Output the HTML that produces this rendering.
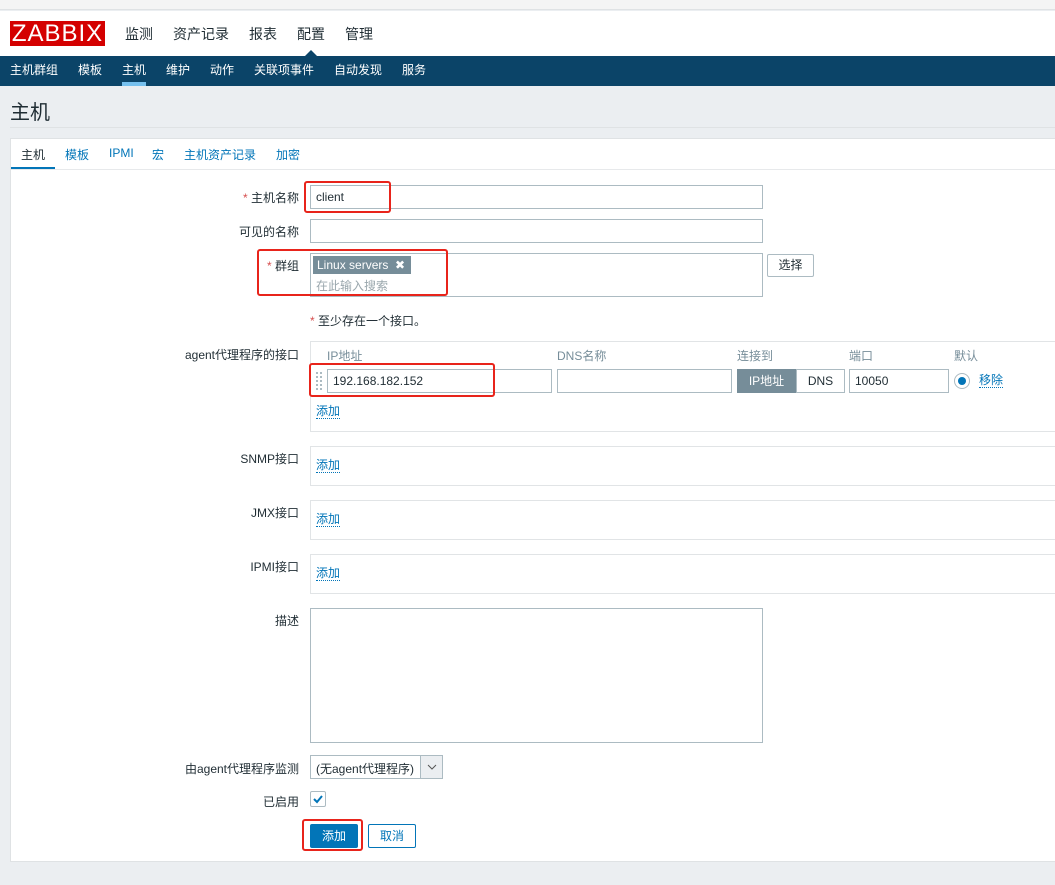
<!DOCTYPE html>
<html><head><meta charset="utf-8"><style>
*{box-sizing:border-box;margin:0;padding:0}
body{width:1055px;height:885px;overflow:hidden;background:#ebeef1;font-family:"Liberation Sans","Noto Sans CJK SC",sans-serif;font-size:12px;color:#1f2c33;position:relative}
.a{position:absolute}
.lbl{position:absolute;right:756px;text-align:right;white-space:nowrap}
.inp{position:absolute;border:1px solid #acbbc2;background:#fff;padding-left:5px;line-height:22px;height:24px}
.red{position:absolute;border:2px solid #e8241b;border-radius:3px}
.lnk{color:#0275b8;border-bottom:1px dotted #0275b8;line-height:14px}
.box{position:absolute;left:310px;right:0;border:1px solid #e1e4e6;border-right:none;background:#fff}
.st{color:#d64e4e}
</style></head><body>
<div class="a" style="top:0;left:0;width:1055px;height:10px;background:#f4f4f4;border-bottom:1px solid #dfe2e4"></div>
<div class="a" style="top:11px;left:0;width:1055px;height:45px;background:#fff"></div>
<div class="a" style="top:21px;left:10px;width:95px;height:25px;background:#d40000;color:#fff;font-size:24px;line-height:25px;text-align:center;letter-spacing:1px">ZABBIX</div>
<div class="a" style="top:24px;left:125px;font-size:14px;color:#1f2c33;word-spacing:0">
<span style="margin-right:20px">监测</span><span style="margin-right:20px">资产记录</span><span style="margin-right:20px">报表</span><span style="margin-right:20px">配置</span><span>管理</span></div>
<div class="a" style="top:50px;left:305px;width:0;height:0;border:6px solid transparent;border-bottom-color:#0b4468;border-top:0"></div>
<div class="a" style="top:56px;left:0;width:1055px;height:30px;background:#0b4468;color:#fff;font-size:12px;line-height:29px">
<span class="a" style="left:10px">主机群组</span><span class="a" style="left:78px">模板</span><span class="a" style="left:122px">主机</span><span class="a" style="left:166px">维护</span><span class="a" style="left:210px">动作</span><span class="a" style="left:254px">关联项事件</span><span class="a" style="left:334px">自动发现</span><span class="a" style="left:402px">服务</span>
<div class="a" style="left:122px;top:26px;width:24px;height:4px;background:#76c0ee"></div></div>
<div class="a" style="top:96px;left:10px;font-size:20px;color:#1f2c33">主机</div>
<div class="a" style="top:127px;left:10px;width:1045px;height:1px;background:#dfe2e4"></div>
<div class="a" style="top:138px;left:10px;width:1045px;height:724px;background:#fff;border:1px solid #dfe2e4;border-right:none"></div>
<div class="a" style="top:146px;left:21px;color:#1f2c33">主机</div>
<div class="a" style="top:146px;left:65px;color:#0275b8">模板</div>
<div class="a" style="top:146px;left:109px;color:#0275b8">IPMI</div>
<div class="a" style="top:146px;left:152px;color:#0275b8">宏</div>
<div class="a" style="top:146px;left:184px;color:#0275b8">主机资产记录</div>
<div class="a" style="top:146px;left:276px;color:#0275b8">加密</div>
<div class="a" style="top:167px;left:11px;width:44px;height:3px;background:#0275b8"></div>
<div class="a" style="top:169px;left:11px;width:1044px;height:1px;background:#e7e9eb"></div>

<div class="lbl" style="top:189px"><span class="st">*</span> 主机名称</div>
<div class="inp" style="top:185px;left:310px;width:453px">client</div>
<div class="lbl" style="top:223px">可见的名称</div>
<div class="inp" style="top:219px;left:310px;width:453px"></div>
<div class="lbl" style="top:257px"><span class="st">*</span> 群组</div>
<div class="inp" style="top:253px;left:310px;width:453px;height:44px;padding:3px"></div>
<div class="a" style="top:256px;left:313px;width:98px;height:18px;background:#768d99;color:#fff;line-height:18px;padding-left:4px">Linux servers&nbsp; ✖</div>
<div class="a" style="top:277px;left:316px;color:#9aa7ad">在此输入搜索</div>
<div class="a" style="top:254px;left:767px;width:47px;height:23px;border:1px solid #acbbc2;border-radius:2px;text-align:center;line-height:21px">选择</div>
<div class="a" style="top:312px;left:310px"><span class="st">*</span> 至少存在一个接口。</div>

<div class="lbl" style="top:346px">agent代理程序的接口</div>
<div class="box" style="top:341px;height:91px"></div>
<div class="a" style="top:347px;left:327px;color:#768d99">IP地址</div>
<div class="a" style="top:347px;left:557px;color:#768d99">DNS名称</div>
<div class="a" style="top:347px;left:737px;color:#768d99">连接到</div>
<div class="a" style="top:347px;left:849px;color:#768d99">端口</div>
<div class="a" style="top:347px;left:954px;color:#768d99">默认</div>
<div class="a" style="top:372px;left:316px;width:6px;height:18px;border-left:2px dotted #acbbc2;border-right:2px dotted #acbbc2"></div>
<div class="inp" style="top:369px;left:327px;width:225px">192.168.182.152</div>
<div class="inp" style="top:369px;left:557px;width:175px"></div>
<div class="a" style="top:369px;left:737px;width:59px;height:24px;background:#768d99;color:#fff;text-align:center;line-height:24px">IP地址</div>
<div class="a" style="top:369px;left:796px;width:49px;height:24px;border:1px solid #acbbc2;text-align:center;line-height:22px">DNS</div>
<div class="inp" style="top:369px;left:849px;width:100px">10050</div>
<div class="a" style="top:373px;left:954px;width:16px;height:16px;border:1px solid #acbbc2;border-radius:50%;background:#fff"><div class="a" style="top:3px;left:3px;width:8px;height:8px;border-radius:50%;background:#0275b8"></div></div>
<div class="a lnk" style="top:373px;left:979px">移除</div>
<div class="a lnk" style="top:404px;left:316px">添加</div>

<div class="lbl" style="top:450px">SNMP接口</div>
<div class="box" style="top:446px;height:40px"></div>
<div class="a lnk" style="top:458px;left:316px">添加</div>
<div class="lbl" style="top:504px">JMX接口</div>
<div class="box" style="top:500px;height:40px"></div>
<div class="a lnk" style="top:512px;left:316px">添加</div>
<div class="lbl" style="top:558px">IPMI接口</div>
<div class="box" style="top:554px;height:40px"></div>
<div class="a lnk" style="top:566px;left:316px">添加</div>

<div class="lbl" style="top:612px">描述</div>
<div class="inp" style="top:608px;left:310px;width:453px;height:135px"></div>
<div class="lbl" style="top:760px">由agent代理程序监测</div>
<div class="inp" style="top:755px;left:310px;width:133px;height:24px;padding-right:22px;line-height:26px">(无agent代理程序)</div>
<div class="a" style="top:756px;left:420px;width:22px;height:22px;background:#ebeef1;border-left:1px solid #acbbc2"><svg width="22" height="22"><path d="M7 9 L11 13 L15 9" fill="none" stroke="#555" stroke-width="1"/></svg></div>
<div class="lbl" style="top:793px">已启用</div>
<div class="a" style="top:791px;left:310px;width:16px;height:16px;border:1px solid #acbbc2;border-radius:2px"><svg width="14" height="14"><path d="M3 7 L6 10 L11 4" fill="none" stroke="#0275b8" stroke-width="2"/></svg></div>
<div class="a" style="top:824px;left:310px;width:48px;height:24px;background:#0275b8;border-radius:2px;color:#fff;text-align:center;line-height:24px">添加</div>
<div class="a" style="top:824px;left:368px;width:48px;height:24px;border:1px solid #0275b8;border-radius:2px;color:#0275b8;text-align:center;line-height:22px">取消</div>

<div class="red" style="top:181px;left:304px;width:87px;height:32px"></div>
<div class="red" style="top:249px;left:257px;width:191px;height:47px"></div>
<div class="red" style="top:363px;left:309px;width:186px;height:34px"></div>
<div class="red" style="top:819px;left:302px;width:61px;height:32px"></div>
</body></html>
